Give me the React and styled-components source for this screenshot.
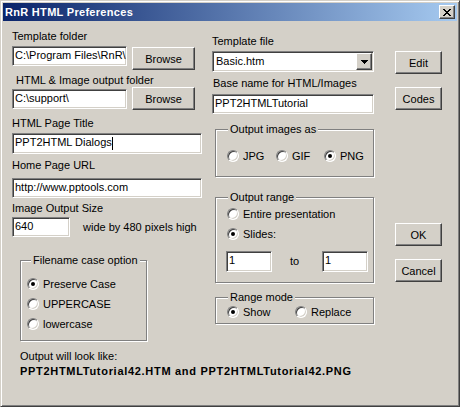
import React from "react";
import styled, { createGlobalStyle } from "styled-components";

const GlobalStyle = createGlobalStyle`
  html, body {
    margin: 0;
    padding: 0;
    background: #d4d0c8;
  }
  body {
    font-family: "Liberation Sans", Arial, sans-serif;
    font-size: 11px;
    color: #000;
  }
`;

const Window = styled.div`
  box-sizing: border-box;
  width: 460px;
  height: 407px;
  padding: 2px;
  background: #d4d0c8;
  border: 1px solid;
  border-color: #d4d0c8 #404040 #404040 #d4d0c8;
  box-shadow: inset 1px 1px #fff, inset -1px -1px #808080;
  display: flex;
  flex-direction: column;
`;

const TitleBar = styled.div`
  height: 18px;
  flex: none;
  display: flex;
  align-items: center;
  padding: 0 2px;
  background: linear-gradient(to right, #0a246a, #a6caf0);
`;

const TitleText = styled.div`
  flex: 1;
  color: #fff;
  font-weight: bold;
  letter-spacing: 0.3px;
  line-height: 18px;
  white-space: nowrap;
`;

const raised = `
  border: 1px solid;
  border-color: #fff #404040 #404040 #fff;
  box-shadow: inset -1px -1px #808080, inset 1px 1px #d4d0c8;
  background: #d4d0c8;
`;

const sunken = `
  border: 1px solid;
  border-color: #808080 #fff #fff #808080;
  box-shadow: inset 1px 1px #404040, inset -1px -1px #d4d0c8;
`;

const CloseButton = styled.div`
  ${raised}
  box-sizing: border-box;
  width: 16px;
  height: 14px;
  display: flex;
  align-items: center;
  justify-content: center;
`;

const Client = styled.div`
  flex: 1;
  display: flex;
  flex-direction: column;
  padding: 9px 0 0 9px;
`;

const Columns = styled.div`
  display: flex;
  align-items: flex-start;
`;

const Column = styled.div`
  display: flex;
  flex-direction: column;
  width: ${(p) => p.$w}px;
  margin-left: ${(p) => p.$ml || 0}px;
  padding-top: ${(p) => p.$pt || 0}px;
`;

const Label = styled.div`
  line-height: 13px;
  margin-top: ${(p) => p.$mt || 0}px;
  padding-left: ${(p) => p.$indent || 0}px;
  white-space: nowrap;
`;

const Field = styled.div`
  ${sunken}
  box-sizing: border-box;
  flex: none;
  width: ${(p) => p.$w}px;
  height: ${(p) => p.$h || 20}px;
  margin-top: ${(p) => p.$mt || 0}px;
  padding: 0 2px;
  line-height: ${(p) => (p.$h || 20) - 4}px;
  background: #fff;
  overflow: hidden;
  white-space: nowrap;
`;

const Caret = styled.span`
  display: inline-block;
  width: 1px;
  height: 13px;
  background: #000;
  vertical-align: middle;
`;

const Select = styled.div`
  ${sunken}
  box-sizing: border-box;
  display: flex;
  align-items: center;
  width: ${(p) => p.$w}px;
  height: 21px;
  margin-top: ${(p) => p.$mt || 0}px;
  padding: 1px 1px 1px 3px;
  background: #fff;
`;

const SelectText = styled.span`
  flex: 1;
  line-height: 17px;
`;

const DropButton = styled.div`
  ${raised}
  box-sizing: border-box;
  width: 16px;
  height: 17px;
  display: flex;
  align-items: center;
  justify-content: center;
`;

const Button = styled.div`
  ${raised}
  box-sizing: border-box;
  flex: none;
  width: ${(p) => p.$w}px;
  height: 23px;
  margin-top: ${(p) => p.$mt || 0}px;
  display: flex;
  align-items: center;
  justify-content: center;
`;

const Row = styled.div`
  display: flex;
  align-items: ${(p) => p.$align || "flex-start"};
  gap: ${(p) => p.$gap || 0}px;
  margin-top: ${(p) => p.$mt || 0}px;
  margin-left: ${(p) => p.$ml || 0}px;
  width: ${(p) => (p.$w ? `${p.$w}px` : "auto")};
`;

const SideText = styled.span`
  margin-left: ${(p) => p.$ml || 0}px;
  line-height: 13px;
  white-space: nowrap;
`;

const ToText = styled.span`
  flex: 1;
  padding-left: 18px;
  line-height: 21px;
`;

const Group = styled.fieldset`
  box-sizing: border-box;
  min-width: 0;
  width: ${(p) => p.$w}px;
  margin: ${(p) => p.$mt || 0}px 0 0 ${(p) => p.$ml || 0}px;
  padding: ${(p) => p.$pad};
  border: 1px solid #808080;
  box-shadow: inset 1px 1px #fff, 1px 1px #fff;
`;

const Legend = styled.legend`
  padding: 0 2px;
  margin-left: ${(p) => p.$ml || 0}px;
  line-height: 13px;
  background: #d4d0c8;
  white-space: nowrap;
`;

const RadioItem = styled.div`
  display: flex;
  align-items: center;
  gap: 4px;
  height: ${(p) => p.$h || 20}px;
  width: ${(p) => (p.$w ? `${p.$w}px` : "auto")};
  white-space: nowrap;
`;

const RadioCircle = styled.span`
  ${sunken}
  position: relative;
  box-sizing: border-box;
  flex: none;
  width: 12px;
  height: 12px;
  border-radius: 50%;
  background: #fff;

  &::after {
    content: "";
    display: ${(p) => (p.$on ? "block" : "none")};
    position: absolute;
    left: 3px;
    top: 3px;
    width: 4px;
    height: 4px;
    border-radius: 50%;
    background: #000;
  }
`;

const Footer = styled.div`
  margin-top: 9px;
  padding-left: 8px;
`;

const BoldLine = styled.div`
  margin-top: 2px;
  line-height: 13px;
  font-weight: bold;
  letter-spacing: 0.7px;
  white-space: nowrap;
`;

const Radio = ({ on, w, h, children }) => (
  <RadioItem $w={w} $h={h}>
    <RadioCircle $on={on} />
    <span>{children}</span>
  </RadioItem>
);

const CloseGlyph = () => (
  <svg width="8" height="7" viewBox="0 0 8 7" shapeRendering="crispEdges">
    <path
      d="M0 0h2v1H0zM6 0h2v1H6zM1 1h2v1H1zM5 1h2v1H5zM2 2h4v1H2zM3 3h2v1H3zM2 4h4v1H2zM1 5h2v1H1zM5 5h2v1H5zM0 6h2v1H0zM6 6h2v1H6z"
      fill="#000"
    />
  </svg>
);

const DownArrow = () => (
  <svg width="7" height="4" viewBox="0 0 7 4" shapeRendering="crispEdges">
    <path d="M0 0h7v1H0zM1 1h5v1H1zM2 2h3v1H2zM3 3h1v1H3z" fill="#000" />
  </svg>
);

export default function App() {
  return (
    <>
      <GlobalStyle />
      <Window>
        <TitleBar>
          <TitleText>RnR HTML Preferences</TitleText>
          <CloseButton>
            <CloseGlyph />
          </CloseButton>
        </TitleBar>
        <Client>
          <Columns>
            <Column $w={190}>
              <Label>Template folder</Label>
              <Row $mt={3} $gap={5}>
                <Field $w={115}>C:\Program Files\RnR\</Field>
                <Button $w={63} $mt={1}>Browse</Button>
              </Row>
              <Label $mt={4} $indent={4}>HTML &amp; Image output folder</Label>
              <Row $gap={5}>
                <Field $w={115} $mt={2}>C:\support\</Field>
                <Button $w={63}>Browse</Button>
              </Row>
              <Label $mt={7}>HTML Page Title</Label>
              <Field $w={190} $h={21} $mt={3}>
                PPT2HTML Dialogs<Caret />
              </Field>
              <Label $mt={5}>Home Page URL</Label>
              <Field $w={190} $mt={6}>http://www.pptools.com</Field>
              <Label $mt={4}>Image Output Size</Label>
              <Row $mt={2} $align="center">
                <Field $w={58}>640</Field>
                <SideText $ml={13}>wide by 480 pixels high</SideText>
              </Row>
              <Group $w={127} $mt={17} $ml={8} $pad="7px 0 6px 6px">
                <Legend $ml={4}>Filename case option</Legend>
                <Radio on>Preserve Case</Radio>
                <Radio>UPPERCASE</Radio>
                <Radio>lowercase</Radio>
              </Group>
            </Column>

            <Column $w={162} $ml={10} $pt={5}>
              <Label>Template file</Label>
              <Select $w={162} $mt={3}>
                <SelectText>Basic.htm</SelectText>
                <DropButton>
                  <DownArrow />
                </DropButton>
              </Select>
              <Label $mt={5} $indent={1}>Base name for HTML/Images</Label>
              <Field $w={162} $mt={4}>PPT2HTMLTutorial</Field>
              <Group $w={159} $mt={9} $ml={3} $pad="10px 0 10px 11px">
                <Legend $ml={1}>Output images as</Legend>
                <Row>
                  <Radio w={49}>JPG</Radio>
                  <Radio w={48}>GIF</Radio>
                  <Radio on>PNG</Radio>
                </Row>
              </Group>
              <Group $w={159} $mt={14} $ml={3} $pad="0 0 10px 11px">
                <Legend $ml={1}>Output range</Legend>
                <Radio>Entire presentation</Radio>
                <Radio on>Slides:</Radio>
                <Row $mt={7} $ml={-1} $w={142}>
                  <Field $w={46} $h={21}>1</Field>
                  <ToText>to</ToText>
                  <Field $w={46} $h={21}>1</Field>
                </Row>
              </Group>
              <Group $w={159} $mt={8} $ml={3} $pad="0 0 3px 11px">
                <Legend $ml={1}>Range mode</Legend>
                <Row>
                  <Radio on w={68} h={16}>Show</Radio>
                  <Radio h={16}>Replace</Radio>
                </Row>
              </Group>
            </Column>

            <Column $w={47} $ml={21}>
              <Button $w={47} $mt={21}>Edit</Button>
              <Button $w={47} $mt={13}>Codes</Button>
              <Button $w={47} $mt={113}>OK</Button>
              <Button $w={47} $mt={13}>Cancel</Button>
            </Column>
          </Columns>
          <Footer>
            <Label>Output will look like:</Label>
            <BoldLine>PPT2HTMLTutorial42.HTM and PPT2HTMLTutorial42.PNG</BoldLine>
          </Footer>
        </Client>
      </Window>
    </>
  );
}
